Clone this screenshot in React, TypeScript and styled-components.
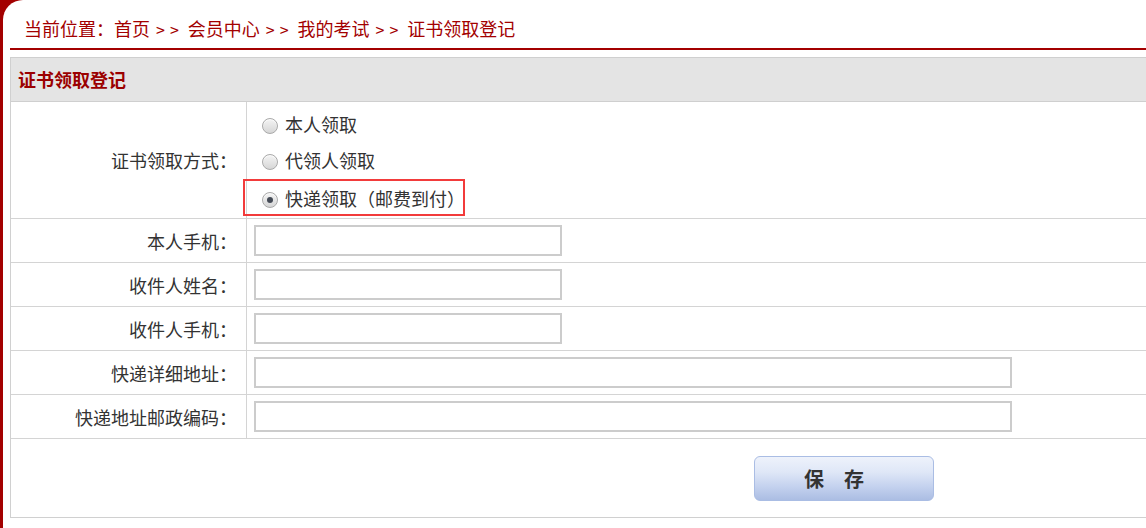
import React, { useState } from 'react';
import styled, { createGlobalStyle } from 'styled-components';

const GlobalStyle = createGlobalStyle`
  html, body {
    margin: 0;
    padding: 0;
    overflow: hidden;
    background: #a30000;
    font-family: "Noto Sans CJK SC", "Noto Sans", sans-serif;
  }
`;

const Page = styled.div`
  margin-left: 3px;
  min-height: 100vh;
  background: #fff;
  border-top-left-radius: 20px;
  padding-left: 7px;
`;

const Breadcrumb = styled.div`
  width: 1430px;
  padding: 18px 0 9px 14px;
  line-height: 20px;
  font-size: 18px;
  color: #a30000;
  border-bottom: 2px solid #a30000;
  white-space: nowrap;
`;

const Sep = styled.span`
  margin: 0 4px 0 6px;
  font-size: 16px;
  letter-spacing: 5px;
`;

const Table = styled.div`
  width: 1430px;
  margin-top: 7px;
  border: 1px solid #d0d0d0;
  border-top-color: #cfcfcf;
`;

const Header = styled.div`
  height: 43px;
  line-height: 43px;
  padding-left: 7px;
  background: #e4e4e4;
  border-bottom: 1px solid #cfcfcf;
  font-size: 18px;
  font-weight: bold;
  color: #9b0000;
`;

const Row = styled.div<{ $last?: boolean }>`
  display: grid;
  grid-template-columns: 236px 1fr;
  border-bottom: ${({ $last }) => ($last ? 'none' : '1px solid #d4d4d4')};
`;

const Label = styled.div<{ $plain?: boolean }>`
  display: flex;
  align-items: center;
  justify-content: flex-end;
  padding-right: 9px;
  border-right: ${({ $plain }) => ($plain ? 'none' : '1px solid #d4d4d4')};
  font-size: 18px;
  color: #333;
`;

const Value = styled.div`
  display: flex;
  align-items: center;
  padding: 6px 7px;
`;

const Options = styled.div`
  display: flex;
  flex-direction: column;
  padding: 4px 15px 2px;
`;

const Option = styled.label<{ $gap?: boolean }>`
  position: relative;
  display: flex;
  align-items: center;
  height: 36px;
  margin-top: ${({ $gap }) => ($gap ? '2px' : '0')};
  font-size: 18px;
  color: #333;
  cursor: pointer;
`;

const Radio = styled.span<{ $checked: boolean }>`
  position: relative;
  box-sizing: border-box;
  width: 16px;
  height: 16px;
  margin: 3px 7px 0 0;
  border-radius: 50%;
  border: 1px solid #a9a9a9;
  background: linear-gradient(to bottom, #f4f4f4, #d6d6d6);
  box-shadow: inset 0 1px 1px rgba(255, 255, 255, 0.8);

  &::after {
    content: '';
    display: ${({ $checked }) => ($checked ? 'block' : 'none')};
    position: absolute;
    left: 4px;
    top: 4px;
    width: 6px;
    height: 6px;
    border-radius: 50%;
    background: #444a55;
  }
`;

const Highlight = styled.span`
  position: absolute;
  left: -19px;
  top: -1px;
  width: 222px;
  height: 37px;
  box-sizing: border-box;
  border: 2px solid #f23b3b;
  pointer-events: none;
`;

const Input = styled.input<{ $wide?: boolean }>`
  box-sizing: border-box;
  width: ${({ $wide }) => ($wide ? '758px' : '308px')};
  height: 31px;
  border: 2px solid #cccccc;
  padding: 0 6px;
  font-size: 14px;
  font-family: inherit;
  outline: none;
`;

const ButtonCell = styled.div`
  display: flex;
  justify-content: center;
  padding: 17px 0 16px;
`;

const SaveButton = styled.button`
  box-sizing: border-box;
  width: 180px;
  height: 45px;
  padding: 0;
  border: 1px solid #aabde4;
  border-radius: 6px;
  background: linear-gradient(to bottom, #eef2fb 0%, #dfe7f7 35%, #c3d1ee 70%, #abbde3 100%);
  font-family: inherit;
  font-size: 20px;
  font-weight: bold;
  color: #333;
  letter-spacing: 20px;
  cursor: pointer;
`;

const methods = ['本人领取', '代领人领取', '快递领取（邮费到付）'];

const fields = [
  { label: '本人手机：', wide: false },
  { label: '收件人姓名：', wide: false },
  { label: '收件人手机：', wide: false },
  { label: '快递详细地址：', wide: true },
  { label: '快递地址邮政编码：', wide: true },
];

export default function App() {
  const [method, setMethod] = useState(2);

  return (
    <>
      <GlobalStyle />
      <Page>
        <Breadcrumb>
          当前位置：首页<Sep>&gt;&gt;</Sep>会员中心<Sep>&gt;&gt;</Sep>我的考试
          <Sep>&gt;&gt;</Sep>证书领取登记
        </Breadcrumb>
        <Table>
          <Header>证书领取登记</Header>
          <Row>
            <Label>证书领取方式：</Label>
            <Options>
              {methods.map((m, i) => (
                <Option key={m} $gap={i === 2} onClick={() => setMethod(i)}>
                  <Radio $checked={method === i} />
                  {m}
                  {i === 2 && <Highlight />}
                </Option>
              ))}
            </Options>
          </Row>
          {fields.map((f) => (
            <Row key={f.label}>
              <Label>{f.label}</Label>
              <Value>
                <Input $wide={f.wide} />
              </Value>
            </Row>
          ))}
          <Row $last>
            <Label $plain />
            <ButtonCell>
              <SaveButton>保存</SaveButton>
            </ButtonCell>
          </Row>
        </Table>
      </Page>
    </>
  );
}
